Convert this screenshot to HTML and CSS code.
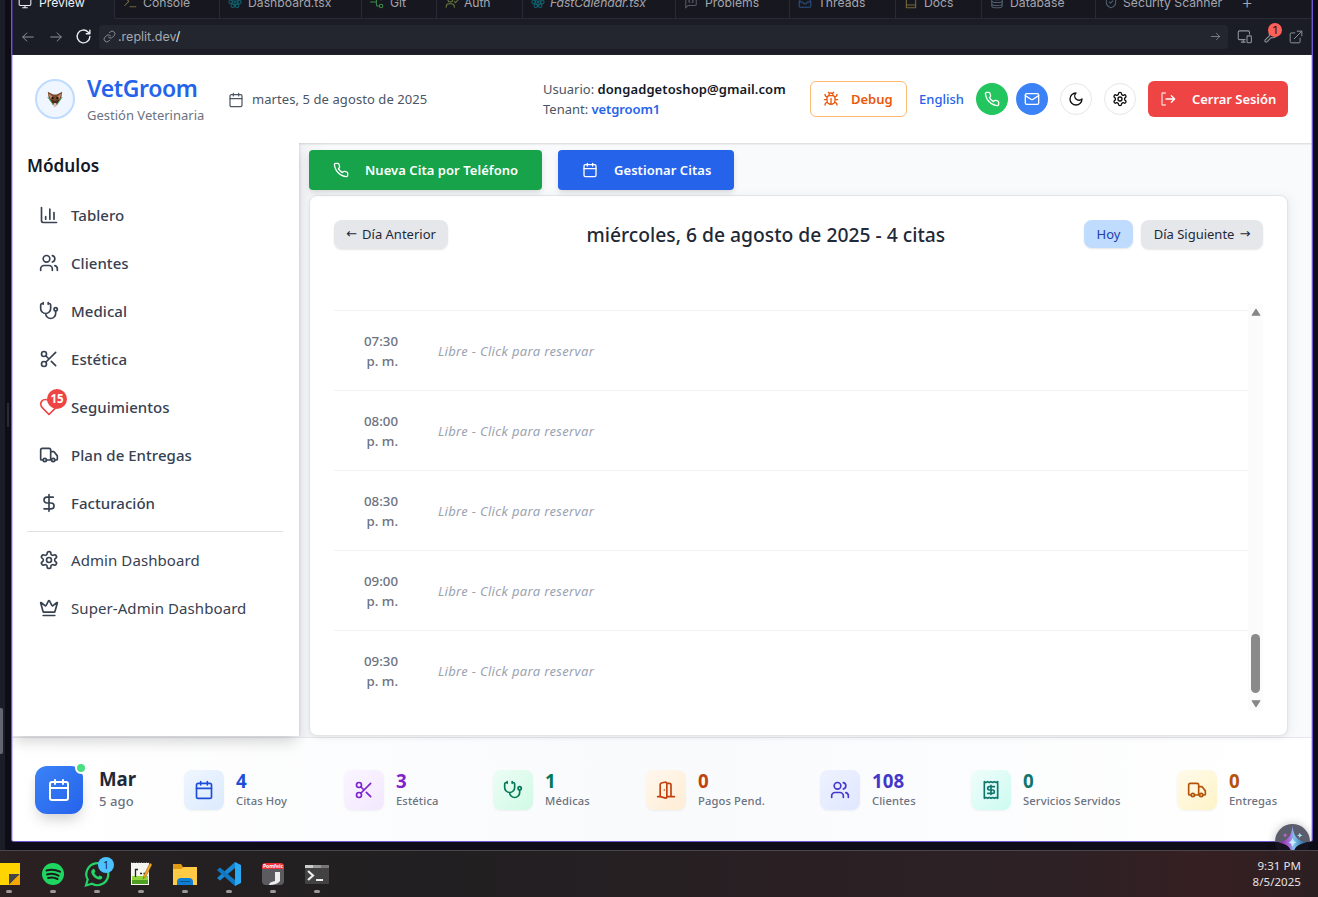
FILE: index.html
```html
<!DOCTYPE html>
<html lang="es">
<head>
<meta charset="utf-8">
<title>VetGroom</title>
<link rel="stylesheet" href="styles.css">
</head>
<body>
<svg class="sprite" aria-hidden="true">
  <symbol id="calendar" viewBox="0 0 24 24"><path d="M8 2v4M16 2v4M3 10h18"/><rect x="3" y="4" width="18" height="18" rx="2"/></symbol>
  <symbol id="phone" viewBox="0 0 24 24"><path d="M22 16.92v3a2 2 0 0 1-2.18 2 19.79 19.79 0 0 1-8.63-3.07 19.5 19.5 0 0 1-6-6 19.79 19.79 0 0 1-3.07-8.67A2 2 0 0 1 4.11 2h3a2 2 0 0 1 2 1.72c.127.96.361 1.903.7 2.81a2 2 0 0 1-.45 2.11L8.09 9.91a16 16 0 0 0 6 6l1.27-1.27a2 2 0 0 1 2.11-.45c.907.339 1.85.573 2.81.7A2 2 0 0 1 22 16.92z"/></symbol>
  <symbol id="mail" viewBox="0 0 24 24"><rect x="2" y="4" width="20" height="16" rx="2"/><path d="m22 7-8.97 5.7a1.94 1.94 0 0 1-2.06 0L2 7"/></symbol>
  <symbol id="moon" viewBox="0 0 24 24"><path d="M12 3a6 6 0 0 0 9 9 9 9 0 1 1-9-9Z"/></symbol>
  <symbol id="gear" viewBox="0 0 24 24"><path d="M12.22 2h-.44a2 2 0 0 0-2 2v.18a2 2 0 0 1-1 1.73l-.43.25a2 2 0 0 1-2 0l-.15-.08a2 2 0 0 0-2.73.73l-.22.38a2 2 0 0 0 .73 2.73l.15.1a2 2 0 0 1 1 1.72v.51a2 2 0 0 1-1 1.74l-.15.09a2 2 0 0 0-.73 2.73l.22.38a2 2 0 0 0 2.73.73l.15-.08a2 2 0 0 1 2 0l.43.25a2 2 0 0 1 1 1.73V20a2 2 0 0 0 2 2h.44a2 2 0 0 0 2-2v-.18a2 2 0 0 1 1-1.73l.43-.25a2 2 0 0 1 2 0l.15.08a2 2 0 0 0 2.73-.73l.22-.39a2 2 0 0 0-.73-2.73l-.15-.08a2 2 0 0 1-1-1.74v-.5a2 2 0 0 1 1-1.74l.15-.09a2 2 0 0 0 .73-2.73l-.22-.38a2 2 0 0 0-2.73-.73l-.15.08a2 2 0 0 1-2 0l-.43-.25a2 2 0 0 1-1-1.73V4a2 2 0 0 0-2-2z"/><circle cx="12" cy="12" r="3"/></symbol>
  <symbol id="logout" viewBox="0 0 24 24"><path d="M8 21H4a1 1 0 0 1-1-1V4a1 1 0 0 1 1-1h4" opacity=".75"/><path d="M17 17l5-5-5-5M22 12H9"/></symbol>
  <symbol id="bug" viewBox="0 0 24 24"><path d="m8 2 1.88 1.88M14.12 3.88 16 2M9 7.13v-1a3.003 3.003 0 1 1 6 0v1M12 20c-3.3 0-6-2.7-6-6v-3a4 4 0 0 1 4-4h4a4 4 0 0 1 4 4v3c0 3.3-2.7 6-6 6M12 20v-9M6.53 9C4.6 8.8 3 7.1 3 5M6 13H2M3 21c0-2.1 1.7-3.9 3.8-4M20.97 5c0 2.1-1.6 3.8-3.5 4M22 13h-4M17.2 17c2.1.1 3.8 1.9 3.8 4"/></symbol>
  <symbol id="chart" viewBox="0 0 24 24"><path d="M3 3v16a2 2 0 0 0 2 2h16M18 17V9M13 17V5M8 17v-3"/></symbol>
  <symbol id="users" viewBox="0 0 24 24"><path d="M16 21v-2a4 4 0 0 0-4-4H6a4 4 0 0 0-4 4v2M22 21v-2a4 4 0 0 0-3-3.87M16 3.13a4 4 0 0 1 0 7.75"/><circle cx="9" cy="7" r="4"/></symbol>
  <symbol id="steth" viewBox="0 0 24 24"><path d="M11 2v2M5 2v2M5 3H4a2 2 0 0 0-2 2v4a6 6 0 0 0 12 0V5a2 2 0 0 0-2-2h-1M8 15a6 6 0 0 0 12 0v-3"/><circle cx="20" cy="10" r="2"/></symbol>
  <symbol id="scissors" viewBox="0 0 24 24"><circle cx="6" cy="6" r="3"/><circle cx="6" cy="18" r="3"/><path d="M8.12 8.12 12 12M20 4 8.12 15.88M14.8 14.8 20 20"/></symbol>
  <symbol id="heart" viewBox="0 0 24 24"><path d="M19 14c1.49-1.46 3-3.21 3-5.5A5.5 5.5 0 0 0 16.5 3c-1.76 0-3 .5-4.5 2-1.5-1.5-2.74-2-4.5-2A5.5 5.5 0 0 0 2 8.5c0 2.3 1.5 4.05 3 5.5l7 7Z"/></symbol>
  <symbol id="truck" viewBox="0 0 24 24"><path d="M14 18V6a2 2 0 0 0-2-2H4a2 2 0 0 0-2 2v11a1 1 0 0 0 1 1h2M15 18H9M19 18h2a1 1 0 0 0 1-1v-3.65a1 1 0 0 0-.22-.624l-3.48-4.35A1 1 0 0 0 17.52 8H14"/><circle cx="17" cy="18" r="2"/><circle cx="7" cy="18" r="2"/></symbol>
  <symbol id="dollar" viewBox="0 0 24 24"><path d="M12 2v20M17 5H9.500a3.500 3.500 0 0 0 0 7h5a3.500 3.500 0 0 1 0 7H6"/></symbol>
  <symbol id="crown" viewBox="0 0 24 24"><path d="M11.562 3.266a.5.5 0 0 1 .876 0L15.39 8.87a1 1 0 0 0 1.516.294L21.183 5.5a.5.5 0 0 1 .798.519l-2.834 10.246a1 1 0 0 1-.956.734H5.81a1 1 0 0 1-.957-.734L2.02 6.02a.5.5 0 0 1 .798-.519l4.276 3.664a1 1 0 0 0 1.516-.294zM5 21h14"/></symbol>
  <symbol id="door" viewBox="0 0 24 24"><path d="M13 4h3a2 2 0 0 1 2 2v14M2 20h3M13 20h9M10 12v.01M13 4.562v16.157a1 1 0 0 1-1.242.97L5 20V5.562a2 2 0 0 1 1.515-1.94l4-1A2 2 0 0 1 13 4.561Z"/></symbol>
  <symbol id="receipt" viewBox="0 0 24 24"><path d="M4 2v20l2-1 2 1 2-1 2 1 2-1 2 1 2-1 2 1V2l-2 1-2-1-2 1-2-1-2 1-2-1-2 1ZM16 8h-6a2 2 0 1 0 0 4h4a2 2 0 1 1 0 4H8M12 17.500v-11"/></symbol>
  <symbol id="arrow-left" viewBox="0 0 24 24"><path d="m10 19-7-7 7-7M21 12H3"/></symbol>
  <symbol id="arrow-right" viewBox="0 0 24 24"><path d="m14 5 7 7-7 7M3 12h18"/></symbol>
  <symbol id="reload" viewBox="0 0 24 24"><path d="M21 12a9 9 0 1 1-2.600-6.400L21 8M21 3v5h-5"/></symbol>
  <symbol id="link" viewBox="0 0 24 24"><path d="M10 13a5 5 0 0 0 7.540.54l3-3a5 5 0 0 0-7.070-7.070l-1.720 1.710M14 11a5 5 0 0 0-7.540-.54l-3 3a5 5 0 0 0 7.070 7.070l1.710-1.710"/></symbol>
  <symbol id="devices" viewBox="0 0 24 24"><path d="M13 17H4a2 2 0 0 1-2-2V5a2 2 0 0 1 2-2h14a2 2 0 0 1 2 2v3M7 21h6M10 17v4"/><rect x="16" y="11" width="7" height="11" rx="1.500"/></symbol>
  <symbol id="wrench" viewBox="0 0 24 24"><path d="M14.700 6.300a1 1 0 0 0 0 1.400l1.600 1.600a1 1 0 0 0 1.400 0l3.770-3.770a6 6 0 0 1-7.940 7.940l-6.910 6.910a2.120 2.120 0 0 1-3-3l6.910-6.910a6 6 0 0 1 7.940-7.940z"/></symbol>
  <symbol id="external" viewBox="0 0 24 24"><path d="M14 2h8v8M9 15 22 2M19 14v6a2 2 0 0 1-2 2H4a2 2 0 0 1-2-2V7a2 2 0 0 1 2-2h6"/></symbol>
  <symbol id="monitor" viewBox="0 0 24 24"><rect x="2" y="3" width="20" height="15" rx="2"/><path d="M8 22h8M12 18v4"/></symbol>
  <symbol id="terminal" viewBox="0 0 24 24"><path d="m3 18 7-7-7-7M12 20h10"/></symbol>
  <symbol id="react" viewBox="0 0 24 24"><ellipse cx="12" cy="12" rx="10.500" ry="4.200"/><ellipse cx="12" cy="12" rx="10.500" ry="4.200" transform="rotate(60 12 12)"/><ellipse cx="12" cy="12" rx="10.500" ry="4.200" transform="rotate(120 12 12)"/><circle cx="12" cy="12" r="1.500"/></symbol>
  <symbol id="branch" viewBox="0 0 24 24"><path d="M1 12h10M16 5h-3a2 2 0 0 0-2 2v10a2 2 0 0 0 2 2h3"/><circle cx="19" cy="5" r="3"/><circle cx="19" cy="19" r="3"/></symbol>
  <symbol id="usercheck" viewBox="0 0 24 24"><circle cx="9" cy="8" r="4"/><path d="M2 21v-1a5 5 0 0 1 5-5h4a5 5 0 0 1 5 5v1M16 11l2 2 4-4"/></symbol>
  <symbol id="comment" viewBox="0 0 24 24"><path d="M3 22V5a2 2 0 0 1 2-2h14a2 2 0 0 1 2 2v11a2 2 0 0 1-2 2H7zM10 8l-2 2.500 2 2.500M14 8l2 2.500-2 2.500"/></symbol>
  <symbol id="inbox" viewBox="0 0 24 24"><path d="M2 12h6l2 3h4l2-3h6M5.500 5 2 12v7a2 2 0 0 0 2 2h16a2 2 0 0 0 2-2v-7l-3.500-7z"/></symbol>
  <symbol id="book" viewBox="0 0 24 24"><path d="M4 19V4a2 2 0 0 1 2-2h14v20H4v-3a2 2 0 0 1 2-2h14"/></symbol>
  <symbol id="database" viewBox="0 0 24 24"><ellipse cx="12" cy="5" rx="9" ry="3"/><path d="M3 5v14c0 4 18 4 18 0V5M3 10c0 4 18 4 18 0M3 15c0 4 18 4 18 0"/></symbol>
  <symbol id="shield" viewBox="0 0 24 24"><path d="M20 13c0 5-3.500 7.500-8 9-4.500-1.500-8-4-8-9V5c3 0 5.500-1 8-3 2.500 2 5 3 8 3zM9 12l2 2 4-4"/></symbol>
</svg>

<div class="workspace">
  <span class="edge-handle"></span>
  <span class="edge-thumb"></span>
  <div class="frame">
    <div class="tabs">
      <div class="tab tab-active"><svg class="ic"><use href="#monitor"/></svg>Preview</div>
      <div class="tab t2"><svg class="ic gold"><use href="#terminal"/></svg>Console</div>
      <div class="tab t3"><svg class="ic teal"><use href="#react"/></svg>Dashboard.tsx</div>
      <div class="tab t4"><svg class="ic green"><use href="#branch"/></svg>Git</div>
      <div class="tab t5"><svg class="ic olive"><use href="#usercheck"/></svg>Auth</div>
      <div class="tab t6"><svg class="ic teal"><use href="#react"/></svg><i>FastCalendar.tsx</i></div>
      <div class="tab t7"><svg class="ic grey"><use href="#comment"/></svg>Problems</div>
      <div class="tab t8"><svg class="ic navy"><use href="#inbox"/></svg>Threads</div>
      <div class="tab t9"><svg class="ic gold"><use href="#book"/></svg>Docs</div>
      <div class="tab t10"><svg class="ic slate"><use href="#database"/></svg>Database</div>
      <div class="tab t11"><svg class="ic slate"><use href="#shield"/></svg>Security Scanner<span class="plus">+</span></div>
    </div>
    <div class="toolbar">
      <svg class="ic nav"><use href="#arrow-left"/></svg>
      <svg class="ic nav"><use href="#arrow-right"/></svg>
      <svg class="ic nav reload"><use href="#reload"/></svg>
      <div class="address"><svg class="ic link"><use href="#link"/></svg><span class="url">.replit.dev<b>/</b></span><svg class="ic go"><use href="#arrow-right"/></svg></div>
      <svg class="ic tool"><use href="#devices"/></svg>
      <span class="wrench"><svg class="ic tool"><use href="#wrench"/></svg><span class="alert">1</span></span>
      <svg class="ic tool ext"><use href="#external"/></svg>
    </div>

    <div class="app">
      <header class="header">
        <div class="logo"><svg viewBox="0 0 20 20"><path d="M2 2 8 5h4l6-3-1 7-4 6-3 2-3-2-4-6z" fill="#7a4a2b"/><path d="m3 4 4 3-2 3zM17 4l-4 3 2 3z" fill="#c98d75"/><path d="M5 11c2-1 3 1 5 1s3-2 5-1l-3 5H8z" fill="#4b2b1c"/><circle cx="7.500" cy="9" r="1.200" fill="#1b120c"/><circle cx="12.500" cy="9" r="1.200" fill="#1b120c"/><path d="m2 8 5 7 1 2M18 8l-5 7-1 2" stroke="#37a169" stroke-width="1" fill="none"/><path d="M8.500 14.500h3v4.500h-3z" fill="#e7b9b9"/></svg></div>
        <div class="brand"><h1>VetGroom</h1><p>Gestión Veterinaria</p></div>
        <svg class="ic date-ic"><use href="#calendar"/></svg>
        <span class="date">martes, 5 de agosto de 2025</span>
        <div class="user"><div class="l1">Usuario: <strong>dongadgetoshop@gmail.com</strong></div><div class="l2">Tenant: <strong class="tenant">vetgroom1</strong></div></div>
        <button class="debug"><svg class="ic"><use href="#bug"/></svg><span>Debug</span></button>
        <a class="lang">English</a>
        <button class="round call"><svg class="ic"><use href="#phone"/></svg></button>
        <button class="round msg"><svg class="ic"><use href="#mail"/></svg></button>
        <button class="round plain"><svg class="ic"><use href="#moon"/></svg></button>
        <button class="round plain"><svg class="ic"><use href="#gear"/></svg></button>
        <button class="logout"><svg class="ic"><use href="#logout"/></svg><span>Cerrar Sesión</span></button>
      </header>

      <div class="body">
        <aside class="sidebar">
          <h2>Módulos</h2>
          <nav>
            <a><svg class="ic"><use href="#chart"/></svg><span>Tablero</span></a>
            <a><svg class="ic"><use href="#users"/></svg><span>Clientes</span></a>
            <a><svg class="ic"><use href="#steth"/></svg><span>Medical</span></a>
            <a><svg class="ic"><use href="#scissors"/></svg><span>Estética</span></a>
            <a><svg class="ic heart"><use href="#heart"/></svg><span class="count">15</span><span>Seguimientos</span></a>
            <a><svg class="ic"><use href="#truck"/></svg><span>Plan de Entregas</span></a>
            <a><svg class="ic"><use href="#dollar"/></svg><span>Facturación</span></a>
          </nav>
          <nav class="admin">
            <a><svg class="ic"><use href="#gear"/></svg><span>Admin Dashboard</span></a>
            <a><svg class="ic"><use href="#crown"/></svg><span>Super-Admin Dashboard</span></a>
          </nav>
        </aside>
        <main class="main">
          <div class="actions">
            <button class="act new"><svg class="ic"><use href="#phone"/></svg><span>Nueva Cita por Teléfono</span></button>
            <button class="act manage"><svg class="ic"><use href="#calendar"/></svg><span>Gestionar Citas</span></button>
          </div>
          <section class="card">
            <div class="day">
              <button class="pill prev"><span class="arr">←</span>Día Anterior</button>
              <h3>miércoles, 6 de agosto de 2025 - 4 citas</h3>
              <div class="next-group"><button class="pill today">Hoy</button><button class="pill next">Día Siguiente<span class="arr">→</span></button></div>
            </div>
            <div class="agenda">
              <div class="slots">
                <div class="slot"><span class="time">07:30<br>p. m.</span><em>Libre - Click para reservar</em></div>
                <div class="slot"><span class="time">08:00<br>p. m.</span><em>Libre - Click para reservar</em></div>
                <div class="slot"><span class="time">08:30<br>p. m.</span><em>Libre - Click para reservar</em></div>
                <div class="slot"><span class="time">09:00<br>p. m.</span><em>Libre - Click para reservar</em></div>
                <div class="slot"><span class="time">09:30<br>p. m.</span><em>Libre - Click para reservar</em></div>
              </div>
              <div class="scroll"><svg viewBox="0 0 10 8"><path d="M5 1.200 8.400 6.400H1.600z"/></svg><span class="thumb"></span><svg viewBox="0 0 10 8"><path d="M5 6.800 8.400 1.600H1.600z"/></svg></div>
            </div>
          </section>
        </main>
      </div>

      <footer class="stats">
        <div class="today-box"><div class="big"><svg class="ic"><use href="#calendar"/></svg><span class="online"></span></div><div class="txt"><b>Mar</b><small>5 ago</small></div></div>
        <div class="stat blue"><div class="sq"><svg class="ic"><use href="#calendar"/></svg></div><div class="txt"><b>4</b><small>Citas Hoy</small></div></div>
        <div class="stat purple"><div class="sq"><svg class="ic"><use href="#scissors"/></svg></div><div class="txt"><b>3</b><small>Estética</small></div></div>
        <div class="stat emerald"><div class="sq"><svg class="ic"><use href="#steth"/></svg></div><div class="txt"><b>1</b><small>Médicas</small></div></div>
        <div class="stat orange"><div class="sq"><svg class="ic"><use href="#door"/></svg></div><div class="txt"><b>0</b><small>Pagos Pend.</small></div></div>
        <div class="stat indigo"><div class="sq"><svg class="ic"><use href="#users"/></svg></div><div class="txt"><b>108</b><small>Clientes</small></div></div>
        <div class="stat aqua"><div class="sq"><svg class="ic"><use href="#receipt"/></svg></div><div class="txt"><b>0</b><small>Servicios Servidos</small></div></div>
        <div class="stat amber"><div class="sq"><svg class="ic"><use href="#truck"/></svg></div><div class="txt"><b>0</b><small>Entregas</small></div></div>
      </footer>
    </div>
  </div>
  <div class="assistant"><svg viewBox="0 0 36 36"><defs><linearGradient id="star" x1="0" x2="1"><stop offset="0" stop-color="#86198f"/><stop offset=".42" stop-color="#a873e0"/><stop offset=".55" stop-color="#7cc4ee"/><stop offset="1" stop-color="#1d4f86"/></linearGradient></defs><path d="M18 2c1.200 11 5 15 15 17-10 1.500-13.800 5-15 15-1.200-10-5-13.500-15-15 10-2 13.800-6 15-17z" fill="url(#star)"/><path d="M18 14c.6 3 1.800 4.400 4 5-2.200.6-3.400 2-4 5-.6-3-1.800-4.400-4-5 2.200-.6 3.400-2 4-5z" fill="#c9ecff"/><path d="M10.500 9l.8 1.700 1.700.8-1.700.8-.8 1.700-.8-1.700-1.700-.8 1.700-.8z" fill="#c45fd6"/><path d="M25.500 9l.8 1.900 1.900.8-1.900.8-.8 1.900-.8-1.900-1.900-.8 1.900-.8z" fill="#a5e6f5"/></svg></div>
</div>

<div class="taskbar">
  <div class="apps">
    <div class="app-ic"><svg viewBox="0 0 28 28"><path d="M0 3h25v22H0z" fill="#ffd400"/><path d="M14 25V14h11z" fill="#444"/><path d="M14 25 25 14v11z" fill="#f5a800"/></svg></div>
    <div class="app-ic"><svg viewBox="0 0 28 28"><circle cx="14" cy="14" r="11" fill="#1ed760"/><path d="M7.500 10.500c4.500-1.500 9-1 13.500 1.200M8 14.500c4-1.200 8-.8 11.500 1.200M9 18c3-.9 6.500-.6 9.500 1" stroke="#1c1c1c" stroke-width="2" fill="none" stroke-linecap="round"/></svg></div>
    <div class="app-ic"><svg viewBox="0 0 28 28"><path d="M3 25.500 4.700 19.500A11 11 0 1 1 9 23.800z" fill="none" stroke="#25d366" stroke-width="2.200"/><path d="M9.500 9.500c.8-1 1.700-.8 2 0l.8 2c0 .8-1 1.200-.9 1.800.8 1.600 2 2.700 3.700 3.500.7.100 1-1.200 1.800-1.200l2 1c.8.4.4 1.600-.4 2.300-1.600 1.200-3.700.6-5.800-.6-2-1.200-4-3.800-4.400-5.600-.3-1.300.3-2.500 1.200-3.200z" fill="#25d366"/></svg><span class="wa">1</span></div>
    <div class="app-ic"><svg viewBox="0 0 28 28"><path d="M4 3h18v22H4z" fill="#f3f5ee"/><path d="M5 16h16v8H5z" fill="#8ed63a"/><path d="M5 20h16v4H5z" fill="#4f9e22"/><path d="M4 2.500h18" stroke="#777" stroke-dasharray="1 1.500"/><path d="M8.500 17V9.500h2.500M13 13.500h2M16.500 13.500h2" stroke="#222" fill="none" stroke-width="1.300"/><path d="m16 19 1-4 6-12 2 1.500-6 12z" fill="#f5a623" stroke="#8a5417" stroke-width=".5"/></svg></div>
    <div class="app-ic"><svg viewBox="0 0 28 28"><path d="M2 4h8l2 3h14v18H2z" fill="#e09b14"/><path d="M2 9h8l3-2h13v18H2z" fill="#ffcb45"/><path d="M6 25v-3a4 4 0 0 1 4-4h8a4 4 0 0 1 4 4v3z" fill="#0f7fd4"/><path d="M9 21.500h10" stroke="#075593"/></svg></div>
    <div class="app-ic"><svg viewBox="0 0 28 28"><path d="M20 2 26 5v18l-6 3z" fill="#2aa8f2"/><path d="M20 2v6L5 20.500 2 18z" fill="#1788d4"/><path d="M20 26v-6L5 7.500 2 10z" fill="#0f78c4"/></svg></div>
    <div class="app-ic"><svg viewBox="0 0 28 28"><rect x="3" y="3" width="22" height="22" rx="4" fill="#5b5b60"/><path d="M3 9V7a4 4 0 0 1 4-4h14a4 4 0 0 1 4 4v2z" fill="#f02d3a"/><path d="M16 12h5v9q-3 4-11 4 0-3 6-4z" fill="#eee"/></svg><span class="recent">Pomfeic</span></div>
    <div class="app-ic"><svg viewBox="0 0 28 28"><rect x="2" y="5" width="24" height="19" rx="1" fill="#424242"/><path d="M2 5h8v3H2z" fill="#ccc"/><path d="M10 5h8v3h-8z" fill="#999"/><path d="M18 5h8v3h-8z" fill="#777"/><path d="m5 11 5 4.500-5 4.500" stroke="#ececec" stroke-width="2.200" fill="none"/><path d="M13 20h7" stroke="#ececec" stroke-width="2"/></svg></div>
  </div>
  <div class="clock">9:31 PM<br>8/5/2025</div>
</div>
</body>
</html>
```
FILE: styles.css
```css
* { box-sizing: border-box; }
body { margin: 0; width: 1318px; height: 897px; overflow: hidden; background: #0e0d17; font-family: "Noto Sans", "Open Sans", sans-serif; color: #374151; white-space: nowrap; }
h1, h2, h3, p { margin: 0; }
button { font: inherit; border: 0; padding: 0; display: flex; align-items: center; }
.sprite { position: absolute; width: 0; height: 0; }
.ic { width: 16px; height: 16px; flex: none; fill: none; stroke: currentColor; stroke-width: 2; stroke-linecap: round; stroke-linejoin: round; }

.workspace { position: relative; height: 850px; padding-left: 11px; background: linear-gradient(90deg, #1b1e27 5px, #0e0d17 5px); overflow: hidden; }
.edge-handle { position: absolute; left: 7px; top: 403px; width: 2px; height: 24px; background: #292b35; }
.edge-thumb { position: absolute; left: 0; top: 708px; width: 3px; height: 46px; background: #63666e; border-radius: 0 2px 2px 0; }
.frame { position: relative; width: 1302px; height: 842px; border: 1px solid #6f57d2; border-top: 0; border-radius: 0 0 3px 3px; overflow: hidden; background: #1a1d26; }
.frame::after { content: ""; position: absolute; inset: 0; border: solid #a996ff8c; border-width: 0 1px; pointer-events: none; z-index: 9; }
.frame::before { content: ""; position: absolute; left: 0; right: 0; top: 0; height: 55px; z-index: 10; border: solid #3b2f78; border-width: 0 1px; pointer-events: none; }

.tabs { display: flex; height: 19px; background: #17171f; color: #a3a6ad; overflow: hidden; }
.tab { flex: none; height: 31px; margin-top: -12px; padding: 0 0 2px 8px; display: flex; align-items: center; gap: 6px; border-right: 1px solid #282a35; border-bottom: 1px solid #282a35; font-family: Inter, sans-serif; font-size: 12.200px; }
.tab .ic { width: 14px; height: 14px; stroke-width: 1.800; }
.tab-active { width: 103px; padding-left: 6px; gap: 7px; color: #f0f1f4; background: #1a1d26; border-bottom-color: #1a1d26; }
.t2 { width: 105px; } .t3 { width: 142px; } .t4 { width: 75px; } .t5 { width: 86px; letter-spacing: -.1px; gap: 5px; } .t6 { width: 153px; gap: 5px; letter-spacing: -.1px; } .t7 { width: 114px; gap: 7px; } .t8 { width: 106px; } .t9 { width: 86px; } .t10 { width: 114px; } .t11 { flex: 1; border-right: 0; gap: 5px; }
.gold { color: #75683c; } .teal { color: #10606d; } .green { color: #3c8b4d; } .olive { color: #687b3c; } .grey { color: #565963; } .navy { color: #28548a; } .slate { color: #506071; }
.plus { font-size: 18px; font-weight: 300; margin-left: 14px; }

.toolbar { display: flex; align-items: center; height: 36px; padding: 0 8px 0 9px; color: #8f939b; border-bottom: 1px solid #22242e; }
.toolbar .ic { stroke-width: 1.700; }
.toolbar .nav { width: 14px; height: 14px; margin-right: 14px; }
.toolbar .reload { width: 17px; height: 17px; color: #eceef1; margin: 0 7px 0 -2px; stroke-width: 2; }
.address { display: flex; align-items: center; width: 1129px; height: 24px; margin-right: 9px; padding: 0 7px 0 4px; border-radius: 4px; background: #23262f; }
.toolbar .link { width: 13px; height: 13px; }
.url { margin-left: 2px; font-family: Inter, sans-serif; font-size: 12.500px; color: #a5a8ae; }
.url b { color: #e7e8ea; font-weight: 400; }
.toolbar .go { width: 11px; height: 11px; margin-left: auto; }
.tool { width: 15px; height: 15px; }
.wrench { position: relative; display: flex; margin: 0 11px; }
.alert { position: absolute; left: 5px; top: -6px; width: 14px; height: 14px; border-radius: 50%; background: #ff5f59; color: #281313; font: 11px/14px Inter, sans-serif; text-align: center; }
.toolbar .ext { width: 14px; height: 14px; }

.app { height: 786px; display: flex; flex-direction: column; background: #f9fafb; }
.header { position: relative; z-index: 1; display: flex; align-items: center; height: 88px; flex: none; padding: 0 24px 0 23px; background: #fff; box-shadow: 0 1px 2px #00000026; font-size: 13px; color: #4b5563; }
.logo { width: 40px; height: 40px; border: 2px solid #bfdbfe; border-radius: 50%; background: #eff6ff; display: grid; place-items: center; margin-right: 12px; }
.logo svg { width: 18px; height: 18px; }
.brand { width: 141px; }
.brand h1 { font-size: 23px; line-height: 32px; font-weight: 600; letter-spacing: -.38px; color: #2563eb; }
.brand p { font-size: 13px; line-height: 20px; color: #6b7280; padding-top: 1px; margin-bottom: 1px; }
.brand h1 { margin-top: -1px; }
.date-ic { margin-right: 8px; stroke-width: 1.800; position: relative; top: 1px; }
.date { letter-spacing: .08px; }
.user { width: 243px; margin: 0 24px 0 auto; line-height: 20px; }
.user strong { font-weight: 600; letter-spacing: .09px; color: #111827; }
.user .tenant { color: #2563eb; letter-spacing: -.1px; }
.debug { width: 97px; height: 36px; padding-left: 12px; gap: 12px; border: 1px solid #fdba74; border-radius: 6px; background: #fff; color: #ea580c; font-weight: 600; margin-right: 12px; }
.lang { width: 45px; margin-right: 12px; color: #2563eb; font-weight: 500; }
.round { width: 32px; height: 32px; border-radius: 50%; justify-content: center; margin-right: 12px; color: #111; background: #fff; }
.call { background: #22c55e; color: #fff; margin-right: 8px; }
.msg { background: #3b82f6; color: #fff; }
.plain { border: 1px solid #e5e7eb; }
.logout { width: 140px; height: 36px; padding-left: 12px; gap: 16px; border-radius: 6px; background: #ef4444; color: #fff; font-weight: 600; letter-spacing: -.04px; }

.body { display: flex; height: 594px; flex: none; position: relative; }
.sidebar { width: 287px; height: 593px; padding: 9px 16px 0 15px; background: #fff; box-shadow: 0 8px 14px -3px #0000002e, 1px 0 2px #00000014; position: relative; z-index: 2; clip-path: inset(0 -20px -40px 0); }
.sidebar h2 { font-size: 17.200px; line-height: 28px; font-weight: 600; color: #111827; margin-bottom: 11px; }
.sidebar a { position: relative; display: flex; align-items: center; height: 48px; padding-left: 12px; gap: 12px; font-size: 15px; font-weight: 500; letter-spacing: .04px; }
.sidebar .ic { width: 20px; height: 20px; }
.sidebar .heart { color: #ef4444; }
.count { position: absolute; left: 20px; top: 6px; width: 20px; height: 20px; border-radius: 50%; background: #ef4444; color: #fff; font-size: 11.500px; line-height: 20px; font-weight: 700; text-align: center; }
.admin { margin-top: 4px; padding-top: 4px; border-top: 1px solid #e0e2e6; }
.sidebar .admin a { font-weight: 400; letter-spacing: .08px; }

.main { flex: 1; padding: 7px 24px 0 10px; background: linear-gradient(90deg, #f1f2f5, #f9fafb 30px); }
.actions { display: flex; gap: 16px; height: 45px; }
.act { height: 40px; padding-left: 24px; gap: 16px; border-radius: 4px; color: #fff; font-size: 13px; font-weight: 600; letter-spacing: .05px; box-shadow: 0 3px 6px -1px #00000026; }
.new { width: 233px; background: #16a34a; }
.manage { width: 176px; background: #2563eb; }
.card { height: 541px; padding: 24px; border: 1px solid #e2e4e8; border-radius: 8px; background: #fff; box-shadow: 0 2px 4px #0000000d, 4px 0 12px #0000000a; }
.day { display: flex; justify-content: space-between; align-items: flex-start; height: 84px; }
.pill { height: 29px; padding: 0 0 2px; gap: 5px; border-radius: 8px; background: #e5e7eb; color: #1f2937; font-size: 13px; box-shadow: 0 1px 2px #0000001a; justify-content: center; }
.arr { font-family: "DejaVu Sans", sans-serif; font-size: 13px; }
.prev { width: 114px; } .next { width: 122px; }
.today { width: 49px; height: 28px; background: #bfdbfe; color: #1e40af; padding-bottom: 1px; }
.next-group { display: flex; gap: 8px; }
.day h3 { width: 359px; font-size: 19.300px; line-height: 30px; font-weight: 500; color: #1f2937; }
.agenda { display: flex; height: 407px; }
.slots { flex: 1; padding-top: 6px; overflow: hidden; }
.slot { display: flex; align-items: center; height: 80px; border-top: 1px solid #f0f1f4; font-size: 13px; padding-top: 1px; }
.time { width: 64px; text-align: right; line-height: 20px; font-size: 13.300px; font-weight: 500; color: #6b7280; margin-right: 40px; }
.slot em { color: #9ca3af; letter-spacing: .33px; }
.scroll { width: 15px; padding: 4px 0 3px; background: #fbfbfb; display: flex; flex-direction: column; align-items: center; fill: #878787; }
.scroll svg { width: 12px; height: 9px; stroke: #878787; stroke-linejoin: round; }
.thumb { width: 9px; height: 59px; margin: auto 0 6px; border-radius: 5px; background: #8a8a8a; }

.stats { display: grid; grid-template-columns: 149px 160px 149px 153px 174px 151px 206px 1fr; height: 104px; flex: none; padding: 0 0 0 23px; align-items: center; border-top: 1px solid #e5e7eb; background: linear-gradient(90deg, #fff, #f9fafc 50%, #fff); }
.today-box, .stat { display: flex; align-items: center; gap: 12px; }
.today-box { gap: 16px; }
.big { position: relative; width: 48px; height: 48px; display: grid; place-items: center; border-radius: 12px; color: #fff; background: linear-gradient(135deg, #3b82f6, #2563eb); box-shadow: 0 8px 14px -3px #00000030; }
.big .ic { width: 24px; height: 24px; }
.online { position: absolute; right: -4px; top: -4px; width: 12px; height: 12px; border: 2px solid #fff; border-radius: 50%; background: #4ade80; }
.txt { display: flex; flex-direction: column; }
.txt b { font-size: 18.700px; line-height: 22px; font-weight: 700; }
.stat .txt b { margin-top: -1px; }
.txt small { font-size: 11.200px; line-height: 16px; font-weight: 500; letter-spacing: .12px; color: #6b7280; }
.stat .txt small { padding-top: 1px; }
.today-box b { color: #1f2937; line-height: 24px; margin-top: -1px; }
.today-box small { font-size: 13px; line-height: 20px; }
.sq { width: 40px; height: 40px; display: grid; place-items: center; border-radius: 8px; box-shadow: 0 1px 2px #0000000d; }
.sq .ic { width: 20px; height: 20px; }
.blue { color: #1d4ed8; } .blue .sq { background: linear-gradient(135deg, #eff6ff, #dbeafe); }
.purple { color: #7e22ce; } .purple .sq { background: linear-gradient(135deg, #faf5ff, #f3e8ff); }
.emerald { color: #047857; } .emerald .sq { background: linear-gradient(135deg, #ecfdf5, #d1fae5); }
.orange { color: #c2410c; } .orange .sq { background: linear-gradient(135deg, #fff7ed, #ffedd5); }
.indigo { color: #4338ca; } .indigo .sq { background: linear-gradient(135deg, #eef2ff, #e0e7ff); }
.aqua { color: #0f766e; } .aqua .sq { background: linear-gradient(135deg, #f0fdfa, #ccfbf1); }
.amber { color: #b45309; } .amber .sq { background: linear-gradient(135deg, #fffbeb, #fef3c7); }

.assistant { position: absolute; left: 1275px; top: 824px; width: 35px; height: 35px; border-radius: 50%; background: linear-gradient(#5b5c6c 51%, #14131f 51%); box-shadow: 0 0 8px #0000003d; z-index: 10; }
.assistant svg { width: 35px; height: 35px; display: block; }

.taskbar { display: flex; justify-content: space-between; height: 47px; border-top: 1px solid #494648; background: linear-gradient(90deg, #2b2022, #242021 14%, #211f21 33%, #2b2024 66%, #2d2125 80%, #361f22 92%, #2b1f22); }
.apps { display: flex; margin-left: -13px; }
.app-ic { position: relative; width: 44px; height: 46px; padding: 9px 8px 0; }
.app-ic svg { width: 28px; height: 28px; display: block; }
.app-ic::after { content: ""; display: block; width: 6px; height: 3px; margin: 2px auto 0; border-radius: 2px; background: #9c9798; }
.wa { position: absolute; left: 23px; top: 6px; width: 16px; height: 16px; border-radius: 50%; background: #4cc2ff; color: #15202b; font-size: 10px; line-height: 16px; text-align: center; }
.recent { position: absolute; left: 11px; top: 12px; width: 22px; text-align: center; color: #fff; font-size: 5px; line-height: 6px; font-weight: 700; }
.clock { padding: 7px 17px 0 0; text-align: right; color: #e5e2e3; font-size: 11.500px; letter-spacing: .05px; line-height: 16px; }
```
